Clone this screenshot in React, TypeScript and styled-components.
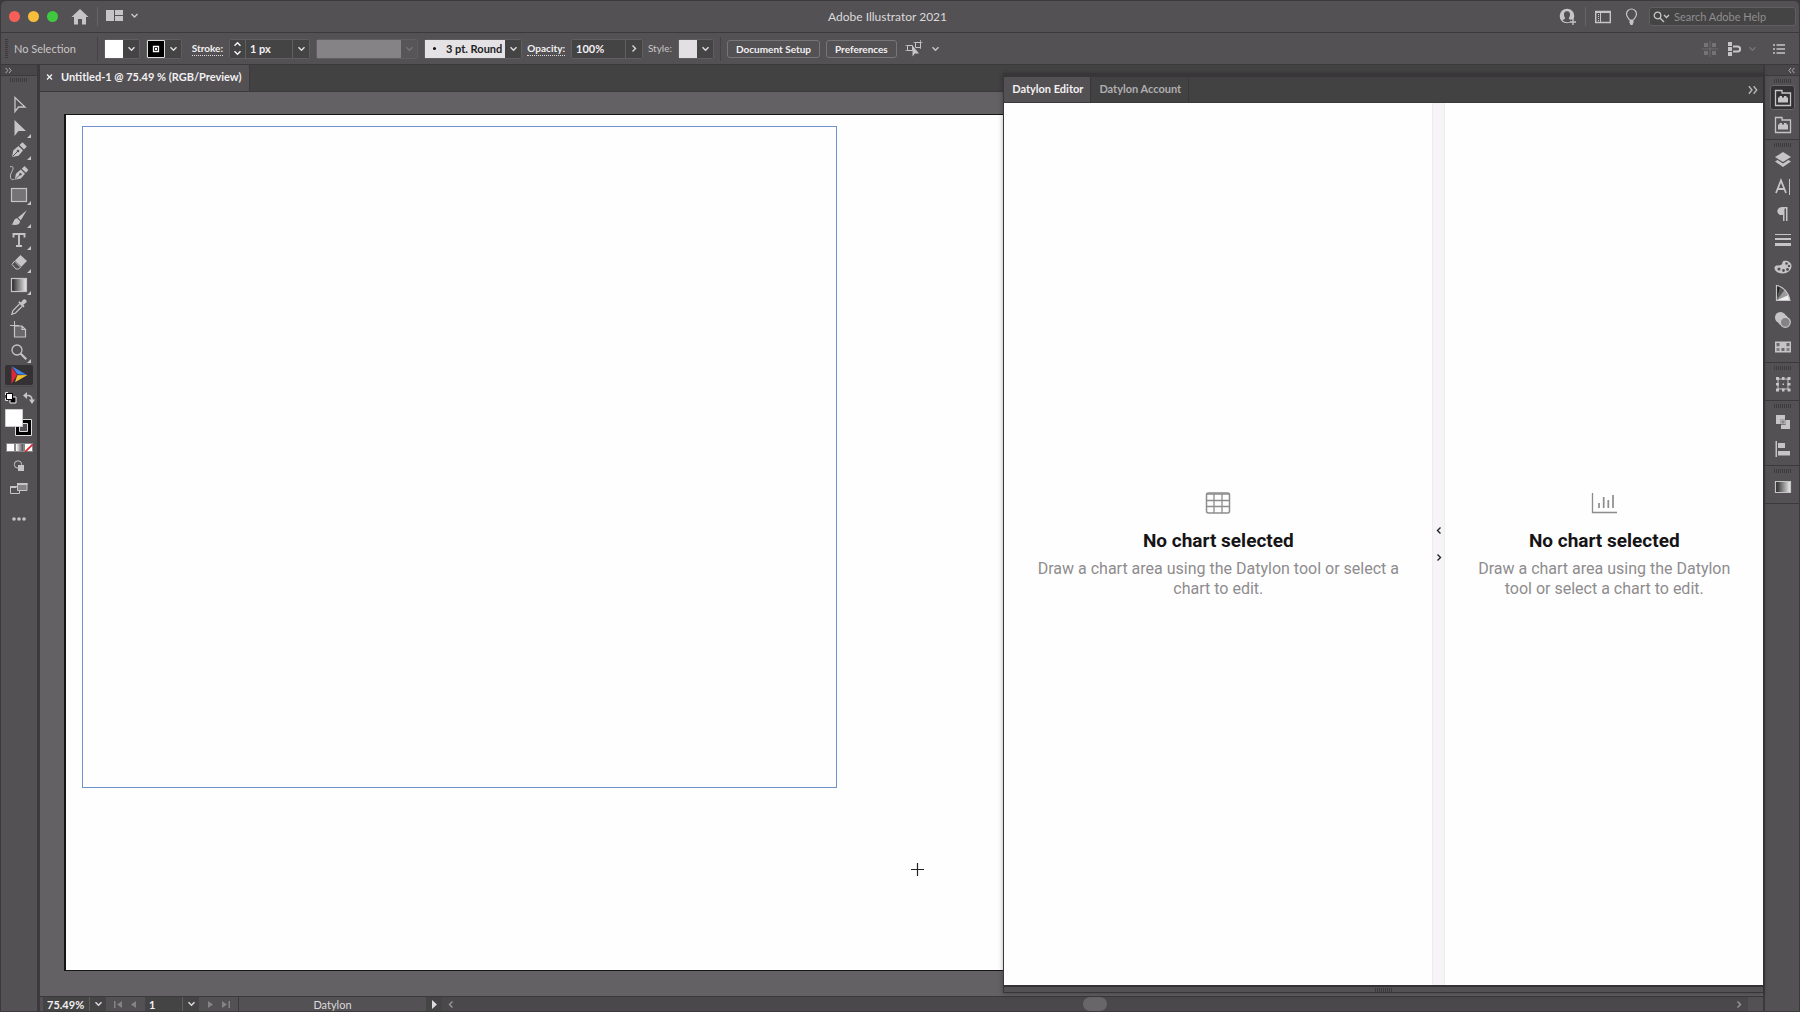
import React from "react";
import styled, { createGlobalStyle, css } from "styled-components";

const c = {
  bar: "#535153",
  dark: "#424242",
  edge: "#3b393b",
  field: "#454445",
  line: "#605e60",
  canvas: "#636163",
  icon: "#c6c4c6",
  dim: "#757375",
  text: "#f2f0f2",
  soft: "#c8c6c8",
};

const GlobalStyle = createGlobalStyle`
  * { box-sizing: border-box; }
  body { margin: 0; background: ${c.edge}; }
  button, input, select { font: inherit; color: inherit; margin: 0; padding: 0; border: 0; border-radius: 0; background: none; }
  button { display: flex; align-items: center; justify-content: center; }
  svg { display: block; flex: none; }
`;

const Window = styled.div`
  height: 100vh;
  min-height: 640px;
  display: flex;
  flex-direction: column;
  border: 1px solid ${c.edge};
  border-radius: 6px 6px 0 0;
  overflow: hidden;
  background: ${c.bar};
  color: ${c.text};
  font: 700 11px/16px Lato, "Open Sans", sans-serif;
`;

/* ---------- title bar ---------- */
const TitleBar = styled.header`
  flex: none;
  height: 32px;
  display: flex;
  align-items: center;
  border-bottom: 1px solid ${c.edge};
  padding: 0 3px 0 8px;
`;
const TitleSide = styled.div<{ $end?: boolean }>`
  flex: 1;
  display: flex;
  align-items: center;
  justify-content: ${(p) => (p.$end ? "flex-end" : "flex-start")};
`;
const Title = styled.h1`
  margin: 0;
  padding-right: 30px;
  font-size: 12px;
  font-weight: 400;
  color: #dcdadc;
`;
const Lights = styled.div`
  display: flex;
  gap: 8px;
  margin-right: 13px;
`;
const Light = styled.button<{ $color: string }>`
  width: 11px;
  height: 11px;
  border-radius: 50%;
  background: ${(p) => p.$color};
`;
const Rule = styled.span`
  width: 1px;
  height: 19px;
  margin: 0 8px;
  background: #666466;
`;
const IconButton = styled.button<{ $gap?: number }>`
  color: ${c.icon};
  margin-right: ${(p) => p.$gap ?? 0}px;
  &:disabled { color: ${c.dim}; }
`;
const Search = styled.label`
  display: flex;
  align-items: center;
  gap: 4px;
  width: 147px;
  height: 19px;
  padding: 0 3px;
  border: 1px solid #605e60;
  border-radius: 3px;
  background: ${c.field};
  color: ${c.icon};
  input {
    flex: 1;
    min-width: 0;
    font-weight: 400;
    outline: 0;
  }
  input::placeholder { color: #8f8d8f; opacity: 1; }
`;

/* ---------- control bar ---------- */
const ControlBar = styled.div`
  flex: none;
  height: 32px;
  display: flex;
  align-items: center;
  gap: 6px;
  padding: 0 14px 0 4px;
  border-bottom: 1px solid ${c.edge};
  font-size: 10px;
`;
const VGrip = styled.span`
  width: 3px;
  height: 19px;
  background: repeating-linear-gradient(${c.edge} 0 1px, transparent 1px 2px);
`;
const Status = styled.span`
  width: 77px;
  font-size: 11px;
  font-weight: 400;
  color: ${c.soft};
`;
const Divider = styled.span`
  width: 1px;
  height: 24px;
  background: #454345;
`;
const Combo = styled.div`
  display: flex;
  height: 20px;
  border: 1px solid ${c.line};
  border-radius: 2px;
`;
const Swatch = styled.button<{ $color: string }>`
  width: 18px;
  background: ${(p) => p.$color};
`;
const Drop = styled.button`
  width: 16px;
  background: ${c.field};
  color: #dcdadc;
  &:disabled { background: #575557; color: ${c.dim}; }
`;
const Stepper = styled.div`
  display: flex;
  flex-direction: column;
  width: 16px;
  background: ${c.field};
  border-right: 1px solid ${c.line};
  button { flex: 1; }
`;
const Field = styled.input<{ $w: number }>`
  && {
    width: ${(p) => p.$w}px;
    padding: 0 4px;
    border-right: 1px solid ${c.line};
    background: ${c.field};
    font-size: 11px;
    outline: 0;
  }
`;
const Label = styled.label<{ $w: number; $plain?: boolean }>`
  width: ${(p) => p.$w}px;
  display: flex;
  justify-content: flex-end;
  line-height: 13px;
  ${(p) =>
    p.$plain
      ? css`font-weight: 400; color: ${c.soft};`
      : css`span { border-bottom: 1px dotted #dcdadc; }`}
`;
const Profile = styled.button`
  width: 84px;
  background: #858385;
`;
const Brush = styled.div`
  position: relative;
  display: flex;
  align-items: center;
  color: #222;
  select {
    appearance: none;
    width: 80px;
    height: 100%;
    padding: 0 3px 0 21px;
    background: #e4e2e4;
    font-size: 11px;
    outline: 0;
  }
  &::before {
    content: "";
    position: absolute;
    left: 8px;
    width: 3px;
    height: 3px;
    border-radius: 50%;
    background: #111;
  }
`;
const PushButton = styled.button`
  && {
    height: 18px;
    padding: 0 8px;
    border: 1px solid #777577;
    border-radius: 3px;
  }
`;
const Spacer = styled.span`
  flex: 1;
`;
const EndTools = styled.div`
  display: flex;
  align-items: center;
`;

/* ---------- workspace ---------- */
const Body = styled.div`
  flex: 1;
  min-height: 0;
  display: flex;
`;
const Rail = styled.aside<{ $right?: boolean }>`
  flex: none;
  width: ${(p) => (p.$right ? 36 : 39)}px;
  display: flex;
  flex-direction: column;
  color: ${c.icon};
  ${(p) =>
    p.$right
      ? css`border-left: 2px solid ${c.edge};`
      : css`border-right: 3px solid ${c.edge};`}
`;
const RailHead = styled.div<{ $right?: boolean }>`
  flex: none;
  display: flex;
  align-items: center;
  justify-content: ${(p) => (p.$right ? "flex-end" : "flex-start")};
  height: 11px;
  padding: 0 4px;
  background: #484648;
  border-bottom: 1px solid ${c.edge};
`;
const Grip = styled.span`
  flex: none;
  align-self: center;
  width: 18px;
  height: 4px;
  background: repeating-linear-gradient(90deg, #3d3b3d 0 1px, transparent 1px 2px);
`;
const ToolBody = styled.div`
  display: flex;
  flex-direction: column;
  padding-top: 2px;
`;
const Tools = styled.div`
  display: grid;
  grid-template-rows: repeat(13, 1fr);
  height: 293px;
  margin: 12px 3px 0;
  border-bottom: 1px solid #4a484a;
`;
const Tool = styled.button<{ $on?: boolean }>`
  position: relative;
  && {
    border-radius: 2px;
    background: ${(p) => (p.$on ? "#333133" : "none")};
    margin: ${(p) => (p.$on ? "1px" : "0")};
    color: inherit;
  }
`;
const Corner = styled.i`
  position: absolute;
  right: 3px;
  bottom: 1px;
  border: 2px solid transparent;
  border-right-color: ${c.icon};
  border-bottom-color: ${c.icon};
`;
const ToolRow = styled.div`
  display: flex;
  justify-content: space-between;
  align-items: center;
  height: 22px;
  padding: 0 2px 0 4px;
`;
const Paint = styled.button`
  align-self: flex-start;
  && { margin: 0 0 6px 4px; }
`;
const PaintModes = styled.div`
  display: flex;
  margin: 0 4px 0 5px;
  button { width: 9px; height: 9px; background: #fff; border: 1px solid #868486; }
  button:nth-child(2) { background: linear-gradient(90deg, #fff, #555); }
`;
const LowTool = styled.button<{ $h: number }>`
  height: ${(p) => p.$h}px;
  width: 100%;
`;
const Section = styled.section<{ $h: number }>`
  flex: none;
  height: ${(p) => p.$h}px;
  display: flex;
  flex-direction: column;
  padding: 3px 4px 2px 5px;
  border-bottom: 1px solid ${c.edge};
`;
const DockButton = styled.button<{ $on?: boolean }>`
  flex: 1;
  position: relative;
  && {
    margin: ${(p) => (p.$on ? "2px 0" : "0")};
    background: ${(p) => (p.$on ? "#333133" : "none")};
    border: 1px solid ${(p) => (p.$on ? "#686668" : "transparent")};
    border-radius: 3px;
  }
`;

const Document = styled.main`
  position: relative;
  flex: 1;
  min-width: 0;
  display: flex;
  flex-direction: column;
`;
const TabBar = styled.div`
  flex: none;
  display: flex;
  height: 27px;
  background: ${c.dark};
  border-bottom: 1px solid ${c.edge};
`;
const DocTab = styled.div`
  display: flex;
  align-items: center;
  gap: 8px;
  padding: 0 7px 2px 6px;
  background: ${c.bar};
  border-right: 1px solid ${c.edge};
`;
const Canvas = styled.div`
  flex: 1;
  min-height: 0;
  display: flex;
  padding: 22px 0 25px 24px;
  background: ${c.canvas};
`;
const Artboard = styled.div`
  position: relative;
  flex: 1;
  background: #fefefe;
  border: solid #151515;
  border-width: 1px 0 1px 2px;
`;
const ChartArea = styled.div`
  position: absolute;
  left: 16px;
  top: 11px;
  width: 755px;
  height: 662px;
  border: 1px solid #6f92cf;
`;
const Cursor = styled.span`
  position: absolute;
  left: 845px;
  top: 748px;
`;

/* ---------- status bar ---------- */
const StatusBar = styled.footer`
  flex: none;
  display: flex;
  height: 15px;
  padding-left: 3px;
  border-top: 1px solid ${c.edge};
  line-height: 16px;
  input { height: 15px; }
`;
const Pager = styled.div`
  display: flex;
  justify-content: space-evenly;
  width: 39px;
  color: #858385;
`;
const Current = styled.div`
  width: 188px;
  text-align: center;
  color: #dcdadc;
  border-left: 1px solid ${c.edge};
  font-weight: 400;
`;
const ScrollTrack = styled.div`
  flex: 1;
  display: flex;
  align-items: center;
  justify-content: space-between;
  background: #4a484a;
  padding: 0 6px 0 6px;
  color: #9a989a;
  border-right: 15px solid ${c.bar};
`;
const Thumb = styled.span`
  width: 24px;
  height: 14px;
  border-radius: 7px;
  background: #686668;
`;

/* ---------- floating panel ---------- */
const Panel = styled.section`
  position: absolute;
  top: 8px;
  right: 0;
  bottom: 18px;
  width: 44.1%;
  display: flex;
  flex-direction: column;
  border: solid #383638;
  border-width: 4px 0 1px 1px;
  background: ${c.bar};
  box-shadow: 0 1px 5px rgba(0, 0, 0, 0.3);
`;
const PanelTabs = styled.div`
  flex: none;
  display: flex;
  height: 26px;
  background: ${c.dark};
  border-bottom: 1px solid ${c.edge};
  padding-right: 5px;
  justify-content: space-between;
  > div { display: flex; }
`;
const PanelTab = styled.button<{ $on?: boolean }>`
  && {
    padding: 0 7px 2px 8px;
    border-right: 1px solid #393739;
    background: ${(p) => (p.$on ? c.bar : "none")};
    color: ${(p) => (p.$on ? c.text : "#b0aeb0")};
  }
`;
const PanelBody = styled.div`
  flex: 1;
  min-height: 0;
  display: grid;
  grid-template-columns: minmax(0, 429fr) 13px minmax(0, 318fr);
  background: #fefefe;
`;
const PanelFoot = styled.div`
  flex: none;
  display: flex;
  justify-content: center;
  height: 7px;
  border-top: 2px solid #333133;
`;
const Empty = styled.div`
  display: flex;
  flex-direction: column;
  align-items: center;
  justify-content: center;
  padding: 2px 24px 0;
  color: #8e8c8e;
  text-align: center;
  font: 400 16px/20px Roboto, sans-serif;
  h2 {
    margin: 14px 0 6px;
    color: #161416;
    font-size: 19px;
    line-height: 24px;
    font-weight: 700;
  }
  p { margin: 0; }
`;
const Splitter = styled.div`
  display: flex;
  flex-direction: column;
  align-items: center;
  justify-content: center;
  gap: 18px;
  background: #f6f4f7;
  border: solid #eeecef;
  border-width: 0 1px;
  color: #222;
`;

/* ---------- drawings ---------- */
type SvgProps = { w?: number; h?: number; children: React.ReactNode };
const Svg = ({ w = 18, h = 18, children }: SvgProps) => (
  <svg width={w} height={h} viewBox={`0 0 ${w} ${h}`} fill="none" stroke="none" aria-hidden="true">
    {children}
  </svg>
);
const Down = () => (
  <Svg w={9} h={6}><path d="M1.500 1.200l3 3 3-3" stroke="currentColor" strokeWidth="1.500" /></Svg>
);
const Up = () => (
  <Svg w={9} h={6}><path d="M1.500 4.800l3-3 3 3" stroke="currentColor" strokeWidth="1.500" /></Svg>
);
const Side = ({ left }: { left?: boolean }) => (
  <Svg w={6} h={9}>
    <path d={left ? "M4.500 1.500l-3 3 3 3" : "M1.500 1.500l3 3-3 3"} stroke="currentColor" strokeWidth="1.400" />
  </Svg>
);
const Double = ({ left, s = 7 }: { left?: boolean; s?: number }) => (
  <svg width={s} height={s} viewBox="0 0 8 8" fill="none" stroke="#b8b6b8" strokeWidth="1.1" aria-hidden="true">
    <path d={left ? "M3.500 1L1 4l2.500 3M7.300 1L4.800 4l2.500 3" : "M.700 1l2.500 3L.700 7M4.500 1L7 4 4.500 7"} />
  </svg>
);
const Grad = ({ id }: { id: string }) => (
  <defs>
    <linearGradient id={id}>
      <stop offset="0" stopColor="#222" />
      <stop offset="1" stopColor="#eee" />
    </linearGradient>
  </defs>
);
const nib = (
  <>
    <path d="M2 16l1.200-6.500L8.500 5l4.500 4.500L8.500 14.800z" fill="currentColor" />
    <path d="M9.500 4l3-2.800 4.300 4.300L14 8.500z" fill="currentColor" />
    <path d="M2.500 15.500L7.500 10.500" stroke="#535153" />
    <circle cx="8" cy="10" r="1.300" fill="#535153" />
  </>
);
const library = (
  <Svg>
    <path d="M1.500 2v14.500h15V4H8V1.500H1.500z" stroke="currentColor" strokeWidth="1.300" />
    <path d="M4 13.500V8.500h1.500V7h2.500v1.500h2V7h2.500v1.500H14v5z" fill="currentColor" />
  </Svg>
);

const tools: { name: string; corner?: boolean; on?: boolean; art: React.ReactNode }[] = [
  { name: "Selection", art: <Svg><path d="M5 1.500v14l3.500-4.500h6.500z" stroke="currentColor" strokeWidth="1.300" /></Svg> },
  { name: "Direct Selection", corner: true, art: <Svg><path d="M4.500 1v16l4-5H16z" fill="currentColor" /></Svg> },
  { name: "Pen", corner: true, art: <Svg>{nib}</Svg> },
  {
    name: "Curvature",
    art: (
      <Svg w={20}>
        <g transform="translate(4 1) scale(.92)">{nib}</g>
        <path d="M1 3C3.500 1.500 5 3.500 3.500 6.500S1 11 1.500 13.500 4 16 5.500 15" stroke="currentColor" />
      </Svg>
    ),
  },
  { name: "Rectangle", corner: true, art: <Svg><rect x="1.500" y="2.500" width="15" height="13" fill="#757375" stroke="currentColor" strokeWidth="1.200" /></Svg> },
  {
    name: "Paintbrush",
    corner: true,
    art: (
      <Svg>
        <path d="M16.800 1.200L10.800 11.300 8 8.500z" fill="currentColor" />
        <path d="M7.200 9.300l2.900 2.900c-.2 3.800-4.600 4.400-8.600 3.300 2.200-.8 1.700-6 5.700-6.200z" fill="currentColor" />
      </Svg>
    ),
  },
  { name: "Type", corner: true, art: <Svg><path d="M3.500 6.500V3h11v3.500M9 3v12M6 15h6" stroke="currentColor" strokeWidth="1.900" /></Svg> },
  {
    name: "Eraser",
    corner: true,
    art: (
      <Svg>
        <path d="M10.500 2l6.500 6-5.700 5.800L5 7.500z" fill="currentColor" />
        <path d="M4.500 8l6.200 6.300L8.500 16H6l-4-4.500z" stroke="currentColor" />
      </Svg>
    ),
  },
  { name: "Gradient", corner: true, art: <Svg><Grad id="tool-gradient" /><rect x="1.500" y="2.500" width="15" height="13" fill="url(#tool-gradient)" stroke="currentColor" strokeWidth="1.200" /></Svg> },
  {
    name: "Eyedropper",
    art: (
      <Svg>
        <path d="M9.500 6L3 12.500l-1.200 3.700L5.500 15 12 8.500" stroke="currentColor" strokeWidth="1.200" />
        <path d="M8.200 4.500l1.300-1.300 1.500 1.300 2-2.700c2-2 5 1 3 3l-2.700 2 1.300 1.500-1.300 1.300z" fill="currentColor" />
      </Svg>
    ),
  },
  { name: "Artboard", art: <Svg w={20}><path d="M1 4.500h9M5.500 0v8" stroke="currentColor" /><path d="M5.500 5v11h11V8.500L13 5zM13 5v3.500h3.500" fill="#6a686a" stroke="currentColor" strokeWidth="1.200" /></Svg> },
  { name: "Zoom", corner: true, art: <Svg><circle cx="7" cy="7" r="5" stroke="currentColor" strokeWidth="1.300" /><path d="M10.800 10.800l5.500 5.500" stroke="currentColor" strokeWidth="2.200" /></Svg> },
  {
    name: "Datylon",
    on: true,
    art: (
      <Svg>
        <path d="M1.500 0l15.500 9-9.500-.8z" fill="#3f84e8" />
        <path d="M1.500 1v17L7 8.800z" fill="#e2273a" />
        <path d="M7.300 9.200L17.500 9 5 16.300z" fill="#f5bf2d" />
      </Svg>
    ),
  },
];

const docks: { h: number; items: { name: string; on?: boolean; art: React.ReactNode }[] }[] = [
  { h: 64, items: [{ name: "Datylon Editor", on: true, art: library }, { name: "Datylon Account", art: library }] },
  {
    h: 223,
    items: [
      { name: "Layers", art: <Svg><path d="M9 1l8 5-8 5-8-5z" fill="currentColor" /><path d="M1 10.500l2.500-1.500L9 12.500 14.500 9l2.500 1.500-8 5.500z" fill="currentColor" /></Svg> },
      { name: "Character", art: <Svg><path d="M2 15L7 2.500 12 15M3.500 11h7" stroke="currentColor" strokeWidth="1.800" /><path d="M15.500 1v16" stroke="currentColor" /></Svg> },
      { name: "Paragraph", art: <Svg><path d="M8.500 2h5v14h-1.500V3.500h-1.500V16H9v-6C1.500 11 1.500 2 8.500 2z" fill="currentColor" /></Svg> },
      { name: "Stroke", art: <Svg><path d="M1 3h16v1H1zM1 7h16v2H1zM1 12h16v3H1z" fill="currentColor" /></Svg> },
      {
        name: "Color",
        art: (
          <Svg>
            <path d="M17.500 8C17.500 4 13 2 9.500 3 8 3.500 9 6 7 7S.500 6.500.500 10 5 15.500 9 15.500 17.500 12.500 17.500 8z" fill="currentColor" />
            <g fill="#535153"><circle cx="12.500" cy="5.500" r="1.300" /><circle cx="15" cy="8" r="1.200" /><circle cx="13.500" cy="11.500" r="1.400" /><circle cx="9.500" cy="12.500" r="1.400" /><circle cx="5" cy="11" r="1.600" /></g>
          </Svg>
        ),
      },
      {
        name: "Color Guide",
        art: (
          <Svg>
            <path d="M2.500 16.500v-15c7 1 12 7 13.500 15z" fill="#999" />
            <path d="M2.500 16.500v-15l4 .8z" fill="#222" /><path d="M2.500 16.500l4-14 4.500 3z" fill="#555" /><path d="M2.500 16.500L16 16l-1.500-5z" fill="#eee" />
            <path d="M2.500 16.500v-15c7 1 12 7 13.500 15z" stroke="currentColor" strokeWidth="1.200" />
          </Svg>
        ),
      },
      { name: "Transparency", art: <Svg><circle cx="6.500" cy="6.500" r="5.500" fill="currentColor" /><circle cx="9" cy="9" r="5.500" fill="currentColor" /><circle cx="11.300" cy="11.300" r="5" fill="#858385" stroke="currentColor" strokeWidth="1.200" /></Svg> },
      { name: "Swatches", art: <Svg><path d="M1 3.500h16v11H1z" fill="currentColor" /><g fill="#6b696b"><path d="M2.500 5h3v3.300h-3zM12.500 5h3v3.300h-3z" /><path d="M2.500 10h3v3h-3zM12.500 10h3v3h-3z" fill="#807e80" /><path d="M7.500 10h3v3h-3z" fill="#6b696b" /></g></Svg> },
    ],
  },
  {
    h: 38,
    items: [
      { name: "Transform", art: <Svg><path d="M4 4h10v10H4z" stroke="currentColor" /><g fill="currentColor"><path d="M2 2h3v3H2zM8 2h2.500v3H8zM13.500 2h3v3h-3zM2 8h3v2.500H2zM13.500 8h3v2.500h-3zM2 13.500h3v3H2zM8 13.500h2.500v3H8zM13.500 13.500h3v3h-3zM8.500 8.500h1.500V10H8.500z" /></g></Svg> },
    ],
  },
  {
    h: 65,
    items: [
      { name: "Pathfinder", art: <Svg><path d="M2 2h9v4.500H6.500V11H2zM11.500 7H16v9H7v-4h4.500z" fill="currentColor" /><path d="M7 7h4v4H7z" fill="#8a888a" stroke="#ddd" strokeWidth=".6" /></Svg> },
      { name: "Align", art: <Svg><path d="M1.500 1h1.500v16H1.500zM4 3h7v5H4zM4 11h12v4.500H4z" fill="currentColor" /></Svg> },
    ],
  },
  { h: 38, items: [{ name: "Gradient panel", art: <Svg><Grad id="dock-gradient" /><path d="M1.500 3.500h15v11h-15z" fill="url(#dock-gradient)" stroke="currentColor" strokeWidth="1.200" /></Svg> }] },
];

const tableArt = (
  <Svg w={26} h={24}>
    <rect x="1.500" y="2" width="23" height="20" rx="2" stroke="currentColor" strokeWidth="1.500" />
    <path d="M1.500 3h23M1.500 9.500h23M1.500 15.500h23M9 3v19M17 3v19" stroke="currentColor" strokeWidth="1.300" />
  </Svg>
);
const barsArt = (
  <Svg w={26} h={24}>
    <path d="M1.500 2v19.500H26" stroke="currentColor" strokeWidth="1.300" />
    <path d="M8 17v-5M12.700 17V6M17.300 17V9M22 17V4" stroke="currentColor" strokeWidth="1.700" />
  </Svg>
);

function TitleArea() {
  return (
    <TitleBar>
      <TitleSide>
        <Lights>
          <Light $color="#f55f58" aria-label="Close window" />
          <Light $color="#f8bd3b" aria-label="Minimize window" />
          <Light $color="#40c840" aria-label="Zoom window" />
        </Lights>
        <IconButton aria-label="Home">
          <Svg><path d="M9 1l8.500 8h-2.500v7.500h-4V11H7v5.500H3V9H.500z" fill="currentColor" /></Svg>
        </IconButton>
        <Rule />
        <IconButton aria-label="Arrange documents">
          <Svg w={17} h={15}><path d="M0 1h8v11H0zM9 1h8v5H9zM9 7h8v5H9z" fill="currentColor" /></Svg>
        </IconButton>
        <IconButton aria-label="Arrange options"><Svg w={22} h={8}><path d="M8.500 1l3 3 3-3" stroke="currentColor" strokeWidth="1.500" /></Svg></IconButton>
      </TitleSide>
      <Title>Adobe Illustrator 2021</Title>
      <TitleSide $end>
        <IconButton aria-label="Invite people">
          <Svg>
            <circle cx="8" cy="8" r="7.300" fill="currentColor" />
            <path d="M8 3.300c-2.600 0-3.300 2-3 4 .2 1.500 1 2.200 1.200 3-.2 1-1.700 1.200-2.700 2 1.200 1.300 2.700 1.900 4.500 1.900 1.600 0 3-.5 4.200-1.500-.9-1-2.200-1.400-2.400-2.400.2-.8 1-1.500 1.200-3 .3-2-.4-4-3-4z" fill={c.bar} />
            <path d="M11.500 11.500h6v6h-6z" fill={c.bar} />
            <path d="M14 11v6M11 14h6" stroke="currentColor" strokeWidth="1.300" />
          </Svg>
        </IconButton>
        <Rule />
        <IconButton $gap={12} aria-label="Switch workspace">
          <Svg w={18} h={16}><path d="M1.700 2.500h14.600v11H1.700z" stroke="currentColor" strokeWidth="1.400" /><path d="M1.500 3.500h15" stroke="currentColor" /><path d="M4 5.500h1M4 7.500h1M4 9.500h1M4 11.500h1M6.500 4v9" stroke="currentColor" /></Svg>
        </IconButton>
        <IconButton $gap={10} aria-label="Learn">
          <Svg w={15} h={18}><path d="M5.500 12C5 10 2.500 9.500 2.500 6a5 5 0 0 1 10 0c0 3.500-2.500 4-3 6" stroke="currentColor" strokeWidth="1.200" /><path d="M5.500 11.500h4v3L8.500 17h-2l-1-2.500z" fill="currentColor" /></Svg>
        </IconButton>
        <Search>
          <Svg w={17} h={12}><circle cx="4.500" cy="4.500" r="3.300" stroke="currentColor" strokeWidth="1.300" /><path d="M7 7l4 4M11 4l2.500 2.500L16 4" stroke="currentColor" strokeWidth="1.400" /></Svg>
          <input type="search" placeholder="Search Adobe Help" aria-label="Search Adobe Help" />
        </Search>
      </TitleSide>
    </TitleBar>
  );
}

function Controls() {
  return (
    <ControlBar>
      <VGrip />
      <Status>No Selection</Status>
      <Divider />
      <Combo>
        <Swatch $color="#fff" aria-label="Fill" />
        <Drop aria-label="Fill options"><Down /></Drop>
      </Combo>
      <Combo>
        <Swatch $color="#000" aria-label="Stroke color">
          <Svg><path d="M.500.500h17v17H.500z" stroke="#ddd" /><path d="M6.500 6.500h5v5h-5z" stroke="#fff" strokeWidth="1.300" /><path d="M8 8h2v2H8z" fill="#fff" /></Svg>
        </Swatch>
        <Drop aria-label="Stroke color options"><Down /></Drop>
      </Combo>
      <Label $w={35} htmlFor="stroke"><span>Stroke:</span></Label>
      <Combo>
        <Stepper>
          <button aria-label="Increase stroke"><Up /></button>
          <button aria-label="Decrease stroke"><Down /></button>
        </Stepper>
        <Field id="stroke" $w={47} defaultValue="1 px" />
        <Drop aria-label="Stroke presets"><Down /></Drop>
      </Combo>
      <Combo>
        <Profile aria-label="Variable width profile" />
        <Drop disabled aria-label="Profile options"><Down /></Drop>
      </Combo>
      <Combo>
        <Brush>
          <select aria-label="Brush definition" defaultValue="3"><option value="3">3 pt. Round</option></select>
        </Brush>
        <Drop aria-label="Brush options"><Down /></Drop>
      </Combo>
      <Label $w={37} htmlFor="opacity"><span>Opacity:</span></Label>
      <Combo>
        <Field id="opacity" $w={54} defaultValue="100%" />
        <Drop aria-label="Opacity slider"><Side /></Drop>
      </Combo>
      <Label $w={23} $plain as="span">Style:</Label>
      <Combo>
        <Swatch $color="#e2e0e3" aria-label="Graphic style" />
        <Drop aria-label="Graphic style options"><Down /></Drop>
      </Combo>
      <Divider />
      <PushButton>Document Setup</PushButton>
      <PushButton>Preferences</PushButton>
      <IconButton aria-label="Select similar objects">
        <Svg w={22}><path d="M4.500 5.500h5v5h-5zM12.500 2.500h5v5h-5z" stroke="currentColor" /><path d="M2.500 5.500h3M2.500 10.500h3M10.500 2.500h9M17.500 0v9" stroke="currentColor" strokeWidth=".7" /><path d="M9.500 5.500v11l2.500-3h4z" fill="currentColor" /></Svg>
      </IconButton>
      <IconButton aria-label="Select similar options"><Down /></IconButton>
      <Spacer />
      <EndTools>
        <IconButton disabled $gap={8} aria-label="Snap to grid">
          <Svg w={16}><path d="M2 3h4v4H2zM10 3h4v4h-4zM2 11h4v4H2zM10 11h4v4h-4z" fill="currentColor" /><path d="M8 1v16M0 9h16" stroke="currentColor" strokeWidth=".8" /></Svg>
        </IconButton>
        <IconButton $gap={6} aria-label="Snap to point">
          <Svg w={16}><path d="M2 2h4v4H2zM2 7h4v4H2zM2 12h4v4H2z" fill="currentColor" /><path d="M7 6.500h4.500c3.500 0 3.500 5 0 5H7" stroke="currentColor" strokeWidth="2" /></Svg>
        </IconButton>
        <IconButton disabled $gap={16} aria-label="Snap options"><Down /></IconButton>
        <IconButton aria-label="Customize control bar">
          <Svg w={12} h={12}><path d="M0 2h2M3.500 2H12M0 6h2M3.500 6H12M0 10h2M3.500 10H12" stroke="currentColor" strokeWidth="1.400" /></Svg>
        </IconButton>
      </EndTools>
    </ControlBar>
  );
}

function Toolbox() {
  return (
    <Rail>
      <RailHead><Double /></RailHead>
      <ToolBody>
        <Grip />
        <Tools>
          {tools.map((t) => (
            <Tool key={t.name} $on={t.on} aria-label={t.name}>
              {t.art}
              {t.corner && <Corner />}
            </Tool>
          ))}
        </Tools>
        <ToolRow>
          <button aria-label="Default fill and stroke">
            <Svg w={12} h={12}><path d="M5 5h6v6H5z" fill="#000" stroke="#eee" /><path d="M1.500 1.500h6v6h-6z" fill="#fff" stroke="#000" /><path d="M.500 3V.500H3M.500 6v2.500H3" stroke="#ddd" /></Svg>
          </button>
          <button aria-label="Swap fill and stroke">
            <Svg w={12} h={12}><path d="M3 3.500h2c3 0 4 1.500 4 5" stroke="currentColor" strokeWidth="1.600" /><path d="M4 0v7L0 3.500zM6 7.500h6L9 12z" fill="currentColor" /></Svg>
          </button>
        </ToolRow>
        <Paint aria-label="Fill and stroke">
          <Svg w={28} h={28}>
            <path d="M10.500 10.500h16v16h-16z" fill="#000" stroke="#ddd" />
            <path d="M14.500 14.500h8v8h-8z" fill="#535153" stroke="#ddd" />
            <path d="M.500.500h17v17H.500z" fill="#fff" stroke="#ccc" />
          </Svg>
        </Paint>
        <PaintModes>
          <button aria-label="Color fill" />
          <button aria-label="Gradient fill" />
          <button aria-label="No fill"><Svg w={8} h={8}><path d="M0 8l8-8" stroke="#e0242f" strokeWidth="1.700" /></Svg></button>
        </PaintModes>
        <LowTool $h={28} aria-label="Drawing mode">
          <Svg w={14} h={14}><circle cx="6" cy="5.500" r="3.700" stroke="currentColor" /><path d="M6 6h6v6H6z" fill="currentColor" /></Svg>
        </LowTool>
        <LowTool $h={18} aria-label="Screen mode">
          <Svg><path d="M.500 6.500h9v7h-9z" stroke="currentColor" /><path d="M.500 6h6v2h-6z" fill="currentColor" /><path d="M7.500 3.500h9.500v7H7.500z" fill="#858385" stroke="currentColor" /><path d="M7 3h10.500v2H7z" fill="currentColor" /></Svg>
        </LowTool>
        <LowTool $h={42} aria-label="Edit toolbar">
          <Svg w={14} h={6}><g fill="currentColor"><circle cx="2" cy="3" r="1.800" /><circle cx="7" cy="3" r="1.800" /><circle cx="12" cy="3" r="1.800" /></g></Svg>
        </LowTool>
      </ToolBody>
    </Rail>
  );
}

function EditorPanel() {
  return (
    <Panel>
      <PanelTabs>
        <div>
          <PanelTab $on>Datylon Editor</PanelTab>
          <PanelTab>Datylon Account</PanelTab>
        </div>
        <button aria-label="Collapse panel"><Double s={10} /></button>
      </PanelTabs>
      <PanelBody>
        <Empty>
          {tableArt}
          <h2>No chart selected</h2>
          <p>Draw a chart area using the Datylon tool or select a chart to edit.</p>
        </Empty>
        <Splitter>
          <button aria-label="Expand left"><Side left /></button>
          <button aria-label="Expand right"><Side /></button>
        </Splitter>
        <Empty>
          {barsArt}
          <h2>No chart selected</h2>
          <p>Draw a chart area using the Datylon tool or select a chart to edit.</p>
        </Empty>
      </PanelBody>
      <PanelFoot><Grip /></PanelFoot>
    </Panel>
  );
}

export default function App() {
  return (
    <>
      <GlobalStyle />
      <Window>
        <TitleArea />
        <Controls />
        <Body>
          <Toolbox />
          <Document>
            <TabBar>
              <DocTab>
                <button aria-label="Close document"><Svg w={7} h={8}><path d="M1 1.500l5 5M6 1.500l-5 5" stroke="currentColor" strokeWidth="1.300" /></Svg></button>
                Untitled-1 @ 75.49 % (RGB/Preview)
              </DocTab>
            </TabBar>
            <Canvas>
              <Artboard>
                <ChartArea />
                <Cursor><Svg w={13} h={13}><path d="M0 6.500h13M6.500 0v13" stroke="#222" strokeWidth="1.200" /></Svg></Cursor>
              </Artboard>
            </Canvas>
            <StatusBar>
              <Field $w={47} defaultValue="75.49%" aria-label="Zoom level" />
              <Drop aria-label="Zoom presets"><Down /></Drop>
              <Pager>
                <button aria-label="First artboard"><Svg w={9} h={9}><path d="M0 1h1.500v7H0zM8 1v7L3 4.500z" fill="currentColor" /></Svg></button>
                <button aria-label="Previous artboard"><Svg w={6} h={9}><path d="M5 1v7L0 4.500z" fill="currentColor" /></Svg></button>
              </Pager>
              <Field $w={38} defaultValue="1" aria-label="Artboard number" />
              <Drop aria-label="Artboard list"><Down /></Drop>
              <Pager>
                <button aria-label="Next artboard"><Svg w={6} h={9}><path d="M1 1v7l5-3.500z" fill="currentColor" /></Svg></button>
                <button aria-label="Last artboard"><Svg w={9} h={9}><path d="M7.500 1H9v7H7.500zM1 1v7l5-3.500z" fill="currentColor" /></Svg></button>
              </Pager>
              <Current>Datylon</Current>
              <Drop aria-label="Status options"><Svg w={6} h={9}><path d="M1 0v9l5-4.500z" fill="currentColor" /></Svg></Drop>
              <ScrollTrack>
                <button aria-label="Scroll left"><Side left /></button>
                <Thumb />
                <button aria-label="Scroll right"><Side /></button>
              </ScrollTrack>
            </StatusBar>
            <EditorPanel />
          </Document>
          <Rail $right>
            <RailHead $right><Double left /></RailHead>
            {docks.map((d) => (
              <Section key={d.items[0].name} $h={d.h}>
                <Grip />
                {d.items.map((i) => (
                  <DockButton key={i.name} $on={i.on} aria-label={i.name}>{i.art}</DockButton>
                ))}
              </Section>
            ))}
          </Rail>
        </Body>
      </Window>
    </>
  );
}
